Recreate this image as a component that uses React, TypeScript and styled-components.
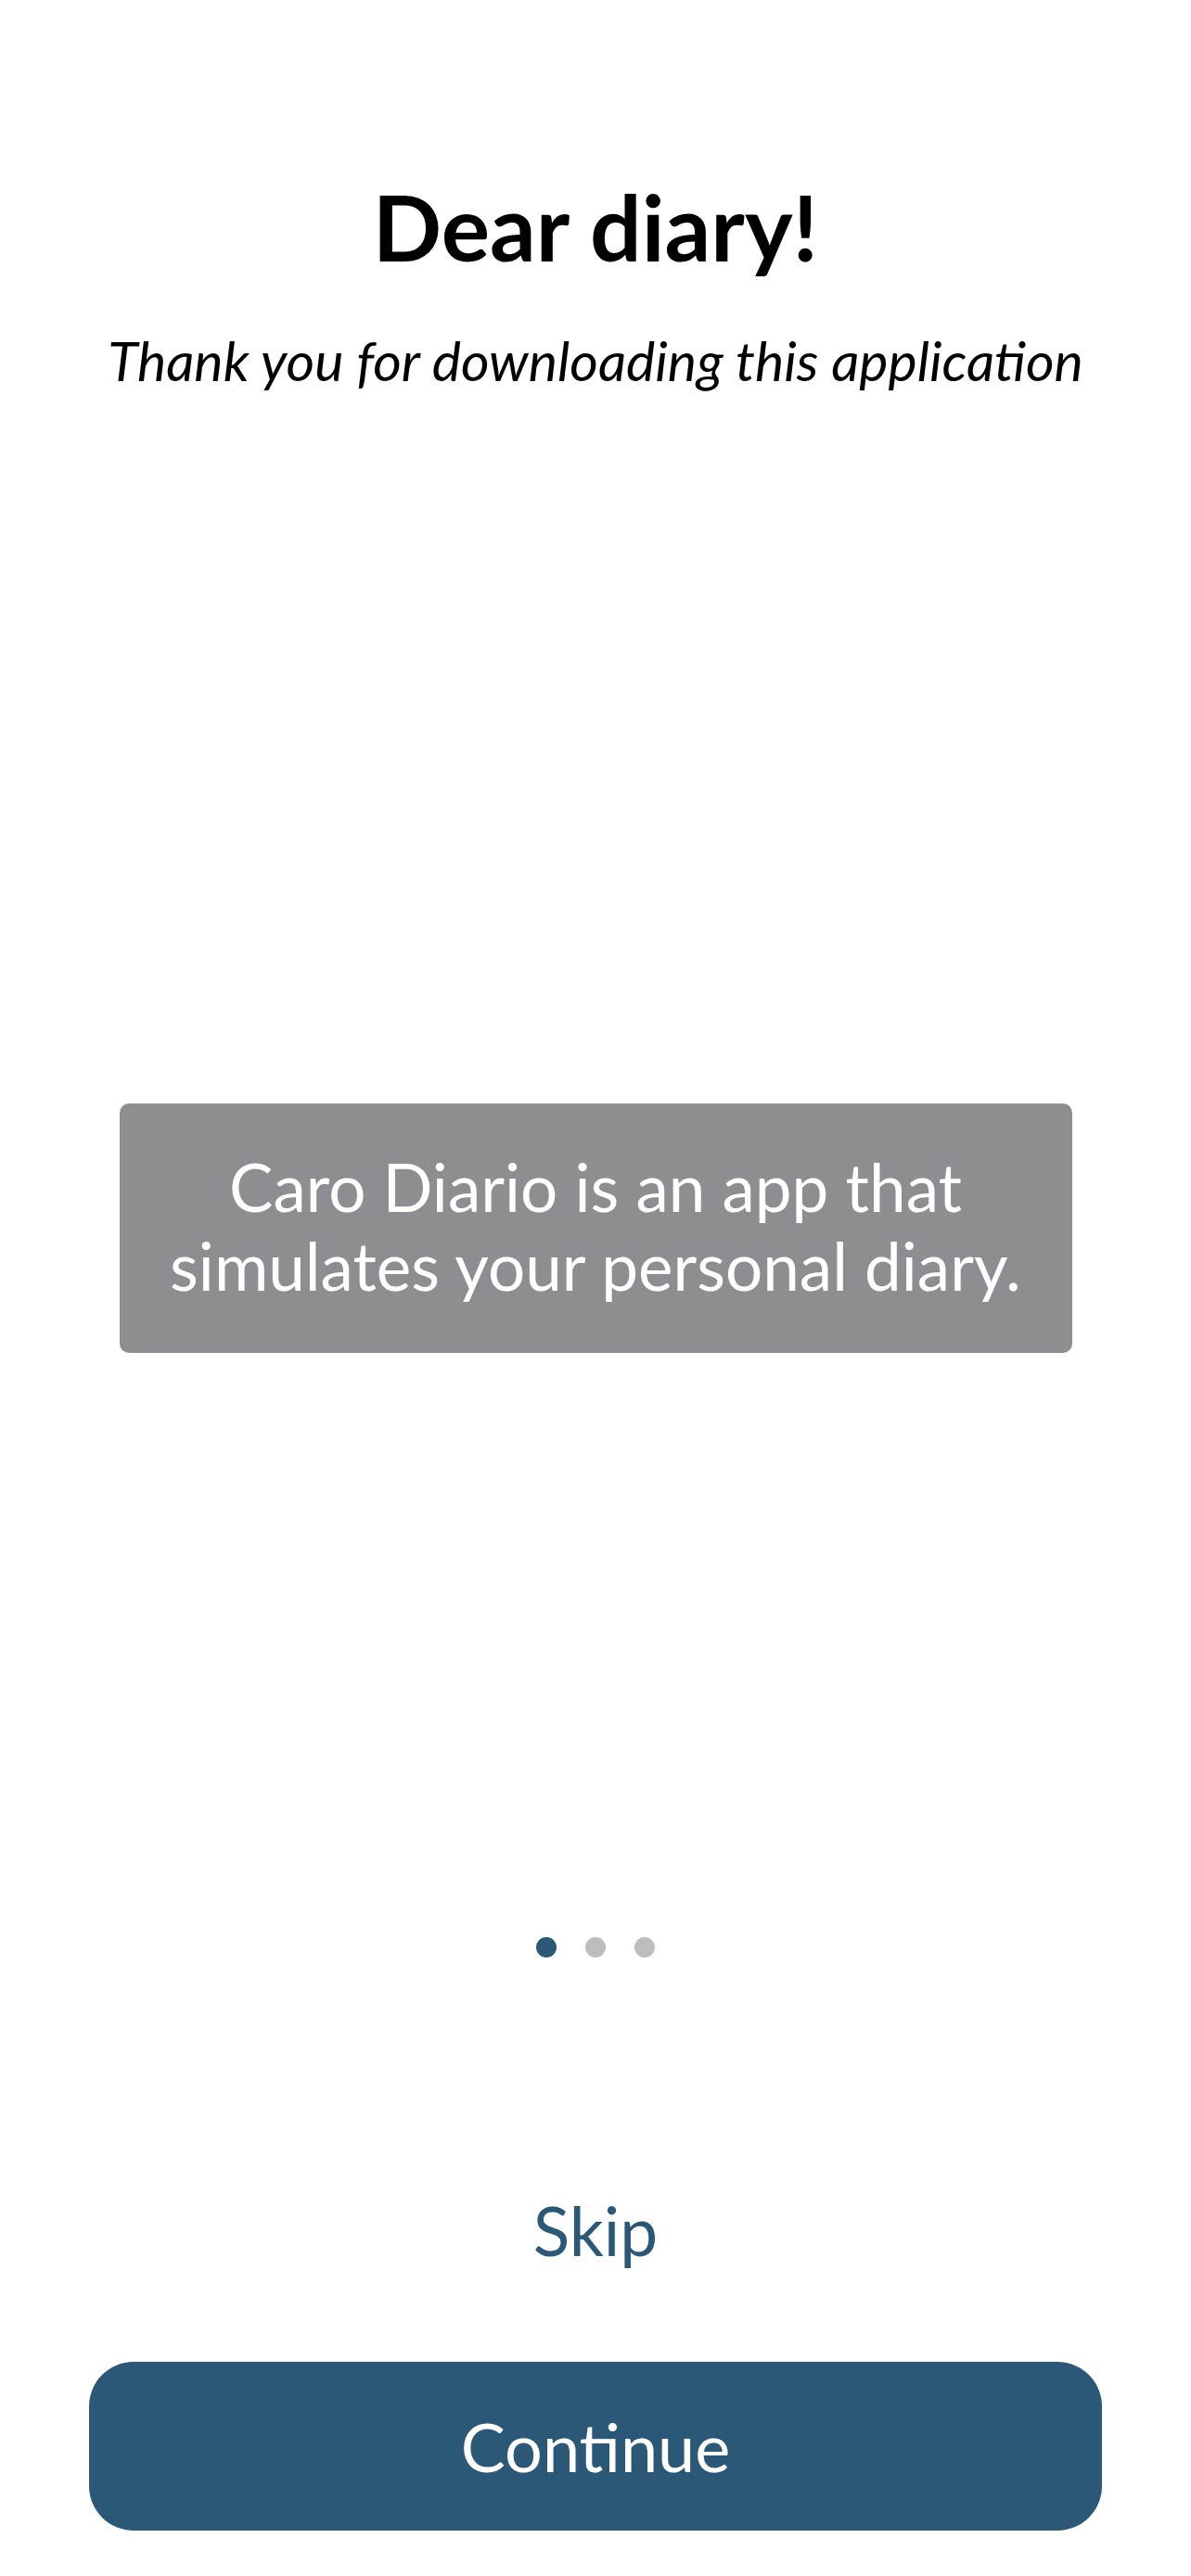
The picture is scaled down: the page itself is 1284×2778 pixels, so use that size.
import styled, { createGlobalStyle } from 'styled-components';

const GlobalStyle = createGlobalStyle`
  html, body {
    margin: 0;
    padding: 0;
    background: #ffffff;
  }
  body {
    font-family: Lato, 'Noto Sans', sans-serif;
  }
`;

const Screen = styled.div`
  min-height: 100vh;
  box-sizing: border-box;
  display: flex;
  flex-direction: column;
  align-items: center;
  padding: 186px 96px 49px;
`;

const Title = styled.h1`
  margin: 0;
  font-size: 98px;
  line-height: 1.2;
  font-weight: 700;
  color: #000;
  text-align: center;
`;

const Subtitle = styled.p`
  margin: 50px 0 0;
  font-size: 59px;
  line-height: 1.2;
  font-style: italic;
  color: #000;
  text-align: center;
`;

const InfoBox = styled.div`
  margin-top: 766px;
  width: 1027px;
  box-sizing: border-box;
  padding: 47px 20px 52px;
  background: #8e8d92;
  border-radius: 10px;
  color: #ffffff;
  font-size: 71px;
  line-height: 85px;
  text-align: center;
`;

const Dots = styled.div`
  margin-top: 630px;
  display: flex;
  gap: 31px;
`;

const Dot = styled.span<{ $active?: boolean }>`
  width: 22px;
  height: 22px;
  border-radius: 50%;
  background: ${(p) => (p.$active ? '#2c5877' : '#bdbdbd')};
`;

const SkipBtn = styled.button`
  margin-top: 251px;
  background: none;
  border: none;
  padding: 0;
  font-family: Lato, 'Noto Sans', sans-serif;
  font-size: 73px;
  line-height: 1.2;
  color: #2c5877;
  cursor: pointer;
`;

const ContinueBtn = styled.button`
  margin-top: auto;
  width: 100%;
  height: 182px;
  border: none;
  border-radius: 48px;
  background: #2c5877;
  color: #ffffff;
  font-family: Lato, 'Noto Sans', sans-serif;
  font-size: 72px;
  display: flex;
  align-items: center;
  justify-content: center;
  cursor: pointer;
`;

const Spacer = styled.div`
  height: 97px;
  flex-shrink: 0;
`;

const App: React.FC = () => {
  const pages = [true, false, false];
  return (
    <>
      <GlobalStyle />
      <Screen>
        <Title>Dear diary!</Title>
        <Subtitle>Thank you for downloading this application</Subtitle>
        <InfoBox>
          Caro Diario is an app that
          <br />
          simulates your personal diary.
        </InfoBox>
        <Dots>
          {pages.map((active, i) => (
            <Dot key={i} $active={active} />
          ))}
        </Dots>
        <SkipBtn type='button'>Skip</SkipBtn>
        <Spacer />
        <ContinueBtn type='button'>Continue</ContinueBtn>
      </Screen>
    </>
  );
};

export default App;
